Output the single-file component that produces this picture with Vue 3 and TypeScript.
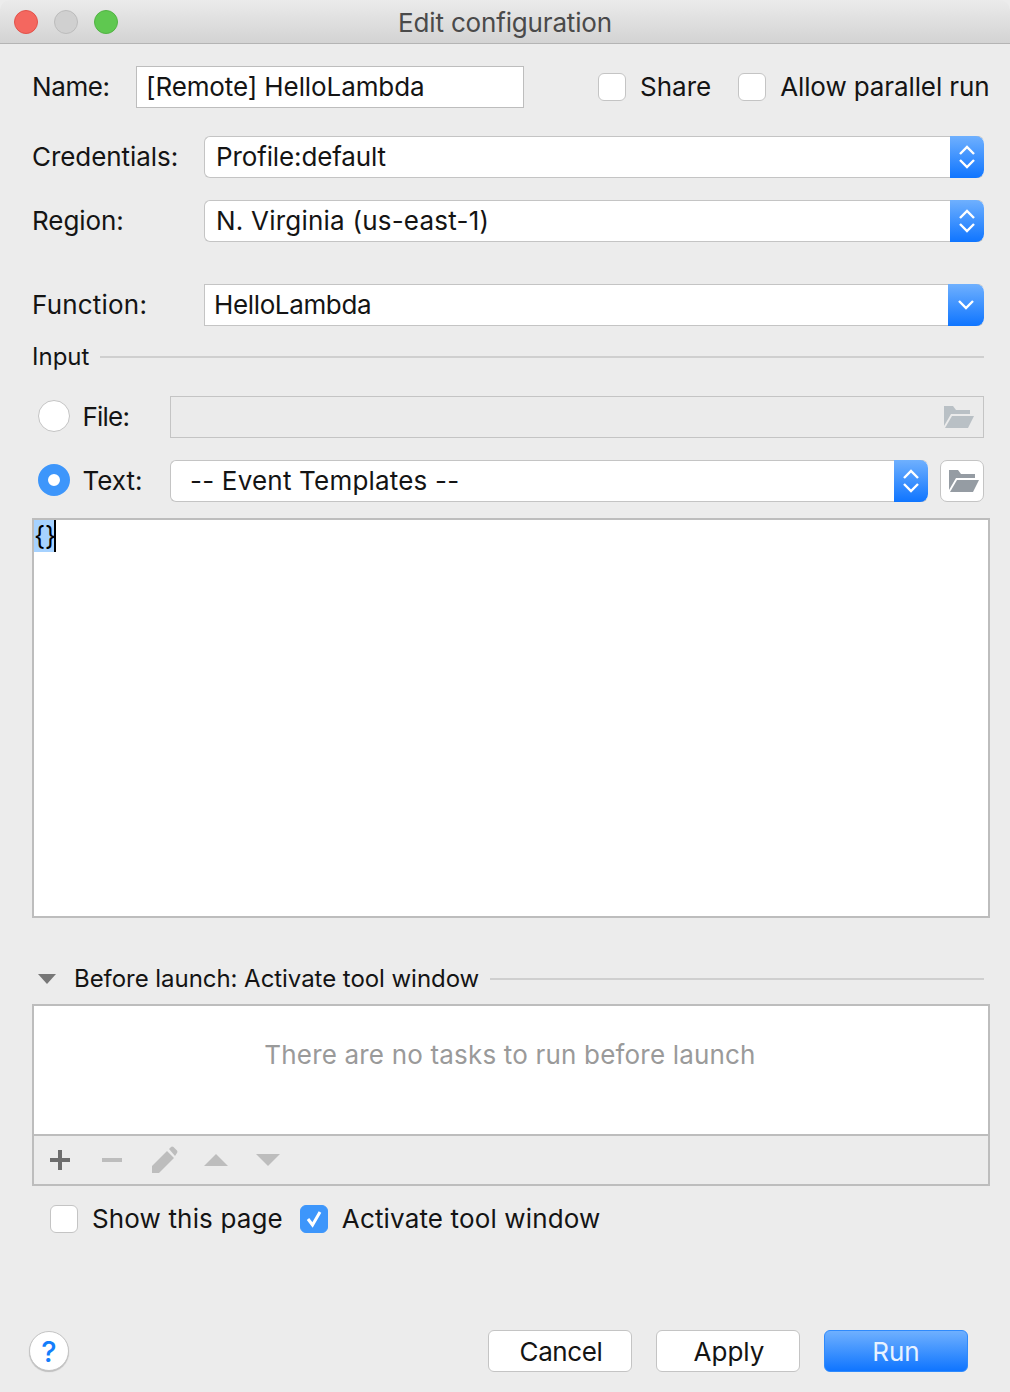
<script setup lang="ts">
const lights = ['red', 'grey', 'green']
const pickers = [
  { label: 'Credentials:', value: 'Profile:default', spacing: 'tight' },
  { label: 'Region:', value: 'N. Virginia (us-east-1)', spacing: 'loose' }
]
</script>

<template>
  <div class="dialog">
    <header class="titlebar">
      <div class="lights">
        <span v-for="l in lights" :key="l" class="light" :class="l"></span>
      </div>
      <span class="title">Edit configuration</span>
    </header>

    <main class="body">
      <div class="name-row">
        <label class="name-label">Name:</label>
        <div class="name-input">[Remote] HelloLambda</div>
        <span class="check share"></span>
        <span class="check-text share-text">Share</span>
        <span class="check parallel"></span>
        <span class="check-text parallel-text">Allow parallel run</span>
      </div>

      <div v-for="p in pickers" :key="p.label" class="form-row picker-row">
        <label class="form-label">{{ p.label }}</label>
        <div class="select">
          <span class="select-value" :class="p.spacing">{{ p.value }}</span>
          <span class="stepper">
            <svg width="18" height="30" viewBox="0 0 18 30" fill="none" stroke="#fff" stroke-width="2.4">
              <path d="M2 12 L9 5 L16 12" />
              <path d="M2 18 L9 25 L16 18" />
            </svg>
          </span>
        </div>
      </div>

      <div class="form-row function-row">
        <label class="form-label function-label">Function:</label>
        <div class="combo">
          <span class="select-value">HelloLambda</span>
          <span class="stepper wide">
            <svg width="18" height="12" viewBox="0 0 18 12" fill="none" stroke="#fff" stroke-width="2.4">
              <path d="M2 2 L9 9 L16 2" />
            </svg>
          </span>
        </div>
      </div>

      <div class="section input-section">
        <span>Input</span>
        <span class="rule"></span>
      </div>

      <div class="radio-row file-row">
        <span class="radio"></span>
        <span class="radio-text file-text">File:</span>
        <div class="file-field">
          <svg width="30" height="22" viewBox="0 0 30 22" fill="#b9c0c5">
            <path d="M0 0 H9 L12 4 H26 V8 H7 L0 20 Z" />
            <path d="M8 10 H30 L24 22 H1 Z" />
          </svg>
        </div>
      </div>

      <div class="radio-row text-row">
        <span class="radio on"></span>
        <span class="radio-text">Text:</span>
        <div class="select template">
          <span class="select-value templates">-- Event Templates --</span>
          <span class="stepper">
            <svg width="18" height="30" viewBox="0 0 18 30" fill="none" stroke="#fff" stroke-width="2.4">
              <path d="M2 12 L9 5 L16 12" />
              <path d="M2 18 L9 25 L16 18" />
            </svg>
          </span>
        </div>
        <button class="folder-btn">
          <svg width="30" height="22" viewBox="0 0 30 22" fill="#959ca3">
            <path d="M0 0 H9 L12 4 H26 V8 H7 L0 20 Z" />
            <path d="M8 10 H30 L24 22 H1 Z" />
          </svg>
        </button>
      </div>

      <div class="editor"><span class="selected">{}</span><span class="caret"></span></div>

      <div class="section launch-section">
        <span class="twisty"></span>
        <span class="launch-text">Before launch: Activate tool window</span>
        <span class="rule"></span>
      </div>

      <div class="tasks">
        <div class="tasks-empty">There are no tasks to run before launch</div>
        <div class="toolbar">
          <span class="tool">
            <svg width="22" height="22" viewBox="0 0 22 22" fill="#6e6e6e">
              <path d="M9 1 H13 V9 H21 V13 H13 V21 H9 V13 H1 V9 H9 Z" />
            </svg>
          </span>
          <span class="tool">
            <svg width="22" height="22" viewBox="0 0 22 22" fill="#bdbdbd">
              <path d="M1 9 H21 V13 H1 Z" />
            </svg>
          </span>
          <span class="tool">
            <svg width="28" height="28" viewBox="-1 0 28 28" fill="#bdbdbd">
              <path d="M1 20 L16 5 L23 12 L8 27 H1 Z" />
              <path d="M18 3 L20 1 Q21 0 22.500 1 L26 4.500 Q27 6 26 7 L24 10 Z" />
            </svg>
          </span>
          <span class="tool">
            <svg width="24" height="14" viewBox="0 0 24 14" fill="#bdbdbd">
              <path d="M12 1 L24 13 H0 Z" />
            </svg>
          </span>
          <span class="tool">
            <svg width="24" height="14" viewBox="0 0 24 14" fill="#bdbdbd">
              <path d="M0 1 H24 L12 13 Z" />
            </svg>
          </span>
        </div>
      </div>

      <div class="options">
        <span class="check"></span>
        <span class="check-text show-text">Show this page</span>
        <span class="check checked">
          <svg width="20" height="20" viewBox="0 0 20 20" fill="none" stroke="#fff" stroke-width="3">
            <path d="M4 10 L8.500 16 L16 3" />
          </svg>
        </span>
        <span class="check-text activate-text">Activate tool window</span>
      </div>

      <footer class="footer">
        <button class="help">?</button>
        <div class="actions">
          <button class="btn cancel">Cancel</button>
          <button class="btn apply">Apply</button>
          <button class="btn primary">Run</button>
        </div>
      </footer>
    </main>
  </div>
</template>

<style>
html,
body {
  margin: 0;
  background: #ececec;
}
</style>

<style scoped>
.dialog {
  width: 1010px;
  height: 1392px;
  overflow: hidden;
  background: #ececec;
  color: #141414;
  font-family: Inter, "Liberation Sans", sans-serif;
  font-size: 26px;
  line-height: 32px;
}

.titlebar {
  position: relative;
  height: 43px;
  box-sizing: content-box;
  display: flex;
  align-items: center;
  justify-content: center;
  background: linear-gradient(#ebebeb, #d3d3d3);
  border-bottom: 1px solid #b4b4b4;
  border-radius: 10px 10px 0 0;
}

.lights {
  position: absolute;
  left: 14px;
  top: 10px;
  display: flex;
  gap: 16px;
}

.light {
  width: 24px;
  height: 24px;
  border-radius: 50%;
  box-sizing: border-box;
}

.red {
  background: #f4675f;
  border: 1px solid #e2524a;
}

.grey {
  background: #d0d0d0;
  border: 1px solid #bcbcbc;
}

.green {
  background: #5fc850;
  border: 1px solid #52b344;
}

.title {
  padding-top: 2px;
  color: #4a4a4a;
  letter-spacing: -0.17px;
}

.body {
  padding: 22px 20px 0 32px;
}

.name-row {
  display: flex;
  align-items: center;
  height: 42px;
  margin-bottom: 28px;
}

.name-label {
  flex: none;
  width: 104px;
  letter-spacing: -0.4px;
}

.name-input {
  flex: none;
  width: 388px;
  height: 42px;
  box-sizing: border-box;
  padding-left: 9px;
  line-height: 39px;
  letter-spacing: -0.1px;
  background: #fff;
  border: 1px solid #bdbdbd;
}

.check {
  flex: none;
  width: 28px;
  height: 28px;
  box-sizing: border-box;
  display: flex;
  align-items: center;
  justify-content: center;
  background: #fff;
  border: 1px solid #c4c4c4;
  border-radius: 6px;
}

.check.checked {
  background: #3d96fb;
  border-color: #3d96fb;
}

.share {
  margin-left: 74px;
}

.parallel {
  margin-left: 27px;
}

.check-text {
  margin-left: 14px;
  white-space: nowrap;
}

.parallel-text {
  letter-spacing: -0.11px;
}

.show-text {
  letter-spacing: 0.14px;
}

.activate-text {
  letter-spacing: 0.15px;
}

.form-row {
  display: flex;
  align-items: center;
  height: 42px;
  padding-right: 6px;
}

.picker-row {
  margin-bottom: 22px;
}

.function-row {
  margin-top: 42px;
}

.form-label {
  width: 172px;
  flex: none;
  letter-spacing: -0.06px;
}

.form-label.function-label {
  letter-spacing: 0.2px;
}

.select,
.combo {
  flex: 1;
  height: 42px;
  box-sizing: border-box;
  display: flex;
  align-items: center;
  background: #fff;
  border: 1px solid #c4c4c4;
  border-right: 0;
  border-radius: 6px;
}

.combo {
  border-radius: 0 6px 6px 0;
}

.select-value {
  flex: 1;
  padding-left: 11px;
  white-space: nowrap;
}

.select-value.tight {
  letter-spacing: -0.13px;
}

.select-value.loose {
  letter-spacing: 0.22px;
}

.combo .select-value {
  padding-left: 9px;
  letter-spacing: -0.36px;
}

.stepper {
  width: 34px;
  height: 42px;
  margin-top: -1px;
  margin-bottom: -1px;
  flex: none;
  display: flex;
  align-items: center;
  justify-content: center;
  background: linear-gradient(#6fb0fe, #0f75ff);
  border-radius: 0 8px 8px 0;
}

.stepper.wide {
  width: 36px;
}

.section {
  display: flex;
  align-items: center;
  padding-right: 6px;
  font-size: 24px;
}

.rule {
  flex: 1;
  height: 2px;
  background: #cfcfcf;
}

.input-section {
  height: 32px;
  margin-top: 15px;
  gap: 11px;
}

.radio-row {
  display: flex;
  align-items: center;
  height: 42px;
  padding-right: 6px;
}

.file-row {
  margin-top: 23px;
}

.text-row {
  margin-top: 22px;
}

.radio {
  flex: none;
  width: 32px;
  height: 32px;
  margin-left: 6px;
  margin-bottom: 2px;
  box-sizing: border-box;
  background: #fff;
  border: 1px solid #c4c4c4;
  border-radius: 50%;
}

.radio.on {
  background: #fff;
  border: 10px solid #3d96fb;
}

.radio-text {
  width: 100px;
  flex: none;
  padding-left: 12.5px;
  box-sizing: border-box;
}

.file-text {
  letter-spacing: -0.8px;
}

.file-field {
  flex: 1;
  height: 42px;
  box-sizing: border-box;
  display: flex;
  align-items: center;
  justify-content: flex-end;
  padding-right: 9px;
  background: #ebebeb;
  border: 1px solid #c4c4c4;
}

.template {
  flex: 1;
}

.select-value.templates {
  padding-left: 19px;
  letter-spacing: 0.2px;
}

.folder-btn {
  width: 44px;
  height: 42px;
  margin-left: 12px;
  padding: 0 0 0 3px;
  flex: none;
  display: flex;
  align-items: center;
  justify-content: center;
  background: #fff;
  border: 1px solid #c4c4c4;
  border-radius: 7px;
}

.editor {
  display: flex;
  height: 400px;
  margin-top: 16px;
  box-sizing: border-box;
  background: #fff;
  border: 2px solid #bdbdbd;
  align-items: flex-start;
}

.selected {
  height: 32px;
  width: 20px;
  text-align: center;
  background: #a6d2ff;
  color: #000;
}

.caret {
  width: 2px;
  height: 32px;
  background: #000;
}

.launch-section {
  height: 32px;
  margin-top: 45px;
}

.launch-text {
  letter-spacing: -0.05px;
}

.twisty {
  width: 0;
  height: 0;
  margin: 0 18px 0 6px;
  border-left: 9px solid transparent;
  border-right: 9px solid transparent;
  border-top: 10px solid #777;
}

.launch-section .rule {
  margin-left: 11px;
}

.tasks {
  margin-top: 9px;
  height: 182px;
  box-sizing: border-box;
  background: #fff;
  border: 2px solid #bdbdbd;
}

.tasks-empty {
  height: 128px;
  box-sizing: border-box;
  padding: 33px 2px 0 0;
  text-align: center;
  letter-spacing: 0.18px;
  color: #9a9a9a;
}

.toolbar {
  height: 50px;
  box-sizing: border-box;
  display: flex;
  align-items: center;
  background: #ececec;
  border-top: 2px solid #bdbdbd;
}

.tool {
  width: 52px;
  display: flex;
  align-items: center;
  justify-content: center;
}

.options {
  display: flex;
  align-items: center;
  height: 32px;
  margin-top: 17px;
  padding-left: 18px;
}

.options .checked {
  margin-left: 17px;
}

.footer {
  display: flex;
  align-items: center;
  justify-content: space-between;
  height: 42px;
  margin-top: 95px;
  padding-right: 22px;
}

.help {
  width: 40px;
  height: 40px;
  margin-left: -3px;
  padding: 0;
  background: #fff;
  border: 1px solid #c4c4c4;
  border-radius: 50%;
  box-shadow: 0 1px 1px rgba(0, 0, 0, 0.2);
  color: #147efb;
  font-family: inherit;
  font-size: 29px;
  font-weight: 500;
}

.actions {
  display: flex;
  gap: 24px;
}

.btn {
  width: 144px;
  height: 42px;
  padding: 0;
  background: #fff;
  border: 1px solid #c4c4c4;
  border-radius: 6px;
  color: #141414;
  font-family: inherit;
  font-size: 26px;
}

.btn.cancel {
  padding-left: 2px;
  letter-spacing: -0.4px;
}

.btn.apply {
  padding-left: 2px;
}

.btn.primary {
  background: linear-gradient(#6fb0fe, #0f75ff);
  border-color: #2f8afc;
  color: #e8f2ff;
}
</style>
